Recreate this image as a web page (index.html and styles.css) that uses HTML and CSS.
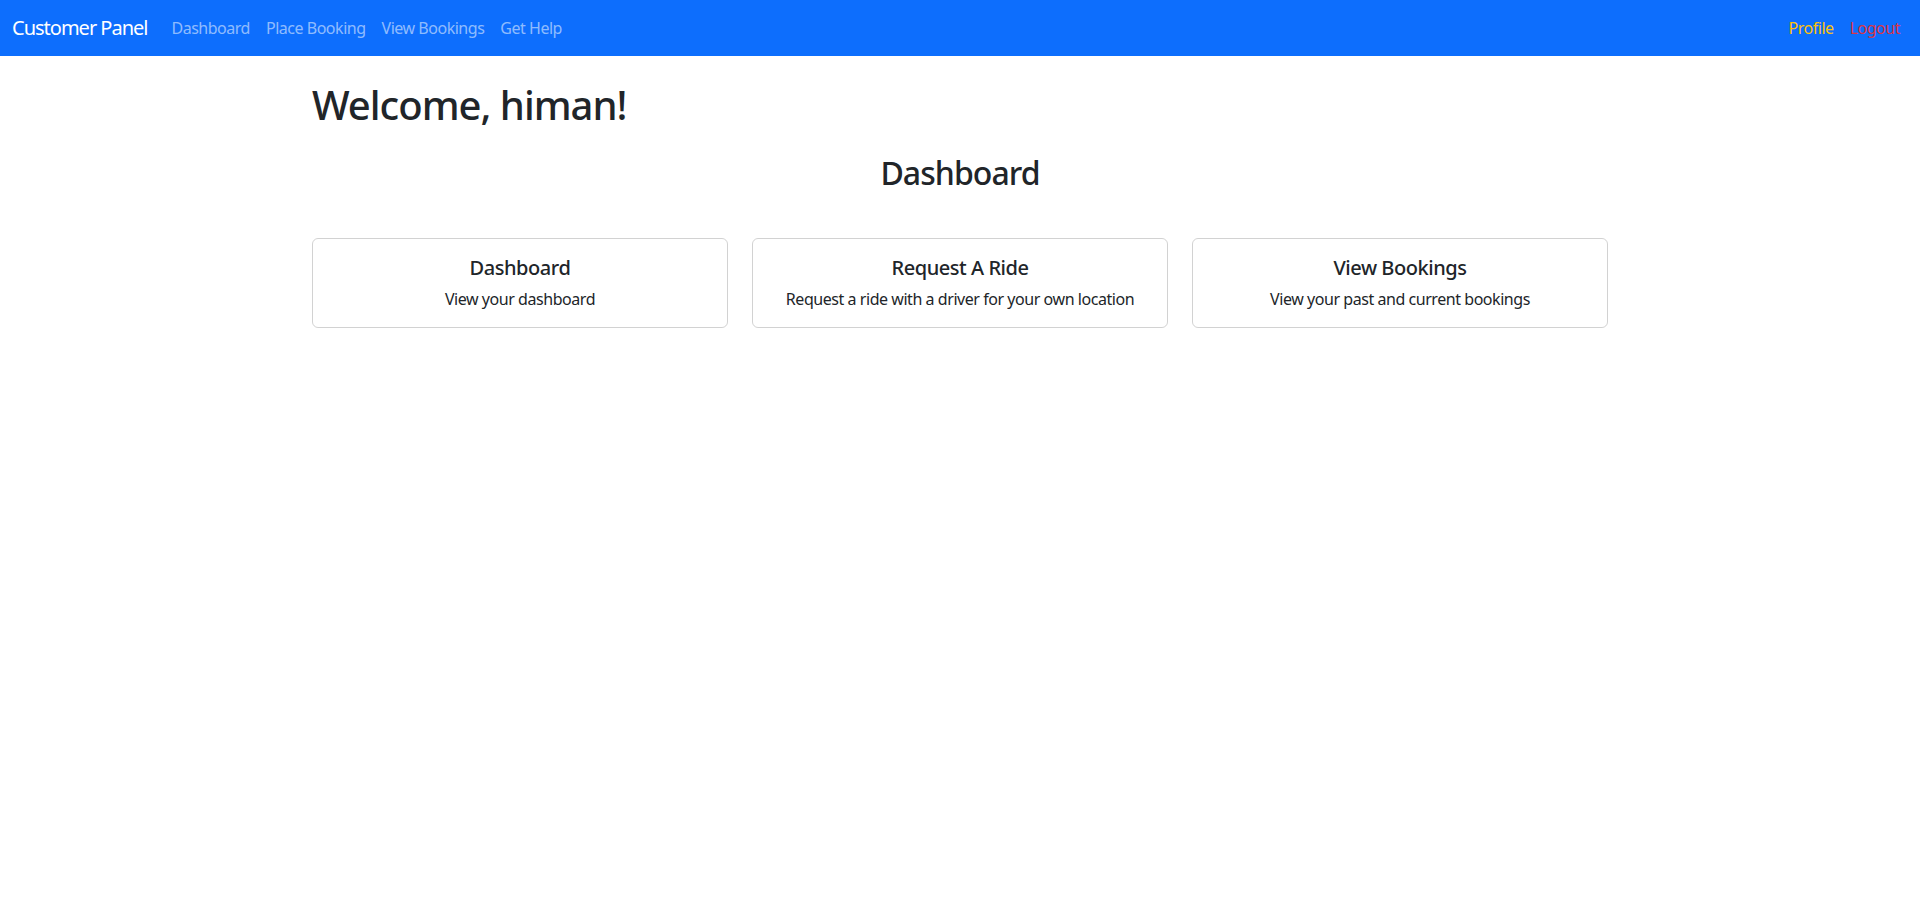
FILE: index.html
```html
<!DOCTYPE html>
<html lang="en">
<head>
<meta charset="utf-8">
<title>Customer Panel</title>
<link rel="stylesheet" href="styles.css">
</head>
<body>
<nav class="navbar">
  <div class="navbar-inner">
    <a class="brand" href="#">Customer Panel</a>
    <ul class="nav">
      <li><a class="nav-link" href="#">Dashboard</a></li>
      <li><a class="nav-link" href="#">Place Booking</a></li>
      <li><a class="nav-link" href="#">View Bookings</a></li>
      <li><a class="nav-link" href="#">Get Help</a></li>
    </ul>
    <ul class="nav nav-right">
      <li><a class="nav-link link-profile" href="#">Profile</a></li>
      <li><a class="nav-link link-logout" href="#">Logout</a></li>
    </ul>
  </div>
</nav>
<main class="container">
  <h1 class="welcome">Welcome, himan!</h1>
  <h2 class="page-title">Dashboard</h2>
  <div class="cards">
    <div class="card">
      <h5 class="card-title">Dashboard</h5>
      <p class="card-text">View your dashboard</p>
    </div>
    <div class="card">
      <h5 class="card-title">Request A Ride</h5>
      <p class="card-text">Request a ride with a driver for your own location</p>
    </div>
    <div class="card">
      <h5 class="card-title">View Bookings</h5>
      <p class="card-text">View your past and current bookings</p>
    </div>
  </div>
</main>
</body>
</html>
```
FILE: styles.css
```css
* { box-sizing: border-box; }
html, body { margin: 0; padding: 0; }
body {
  font-family: "Noto Sans", "Open Sans", sans-serif;
  font-size: 16px;
  line-height: 1.5;
  color: #212529;
  background: #fff;
  letter-spacing: -0.028em;
}
a { text-decoration: none; }
ul { list-style: none; margin: 0; padding: 0; }

.navbar {
  background: #0d6efd;
  height: 56px;
}
.navbar-inner {
  display: flex;
  align-items: center;
  height: 100%;
  padding: 0 12px;
}
.brand {
  color: #fff;
  font-size: 20px;
  line-height: 30px;
  margin-right: 16px;
  letter-spacing: -0.05em;
}
.nav { display: flex; }
.nav-right { margin-left: auto; }
.nav-link {
  display: block;
  padding: 8px;
  color: rgba(255,255,255,0.55);
  font-size: 16px;
  line-height: 24px;
  letter-spacing: -0.03em;
}
.link-profile { color: #ffc107; }
.link-logout { color: #dc3545; }

.container {
  max-width: 1320px;
  margin: 0 auto;
  padding: 0 12px;
}
.welcome {
  margin: 25px 0 0;
  font-size: 40px;
  font-weight: 500;
  line-height: 1.2;
  letter-spacing: -0.025em;
}
.page-title {
  margin: 25px 0 46px;
  font-size: 32px;
  font-weight: 500;
  line-height: 1.2;
  text-align: center;
  letter-spacing: -0.03em;
}
.cards {
  display: grid;
  grid-template-columns: repeat(3, 1fr);
  gap: 24px;
}
.card {
  border: 1px solid rgba(0,0,0,0.175);
  border-radius: 6px;
  padding: 16px;
  text-align: center;
}
.card-title {
  margin: 0 0 7px;
  padding-top: 1px;
  font-size: 20px;
  font-weight: 500;
  line-height: 1.2;
}
.card-text {
  margin: 0;
}
```
